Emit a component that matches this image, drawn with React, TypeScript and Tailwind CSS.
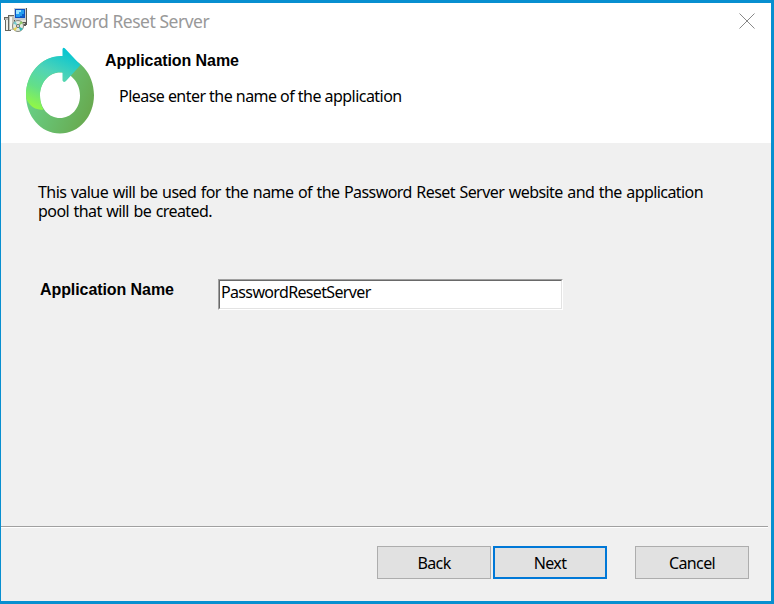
import React from "react";

function InstallerIcon() {
  return (
    <svg width="24" height="25" viewBox="0 0 24 25" shapeRendering="crispEdges">
      <path d="M0 9h4V7h6v14H7v2H1V12H0z" fill="#66665f" />
      <path d="M1 10h3v2H1z" fill="#bdbdb5" />
      <path d="M2 12h2v10H2z" fill="#f0f0e9" />
      <path d="M5 8h5v14H5z" fill="#c4c4ba" />
      <path d="M6 9h2v12H6z" fill="#f7f7f2" />
      <path d="M10 0h13v12H10z" fill="#c3cbd2" />
      <path d="M22 0h1v12h-1z" fill="#5a5a55" />
      <path d="M11 1h10v9H11z" fill="#0b4fc0" />
      <path d="M12 2h8v7h-8z" fill="#239cf0" />
      <path d="M12 2h5v2h-2v2h-3z" fill="#9be4ff" />
      <path d="M18 6h2v3h-4V8h2z" fill="#0b5fcb" />
      <path d="M10 12h13v4l-2 2H10z" fill="#5a5a55" />
      <path d="M11 12h11v2H11z" fill="#e3e3da" />
      <path d="M18 15h3v1h-3z" fill="#c9c9be" />
      <g shapeRendering="auto">
        <circle cx="14" cy="18" r="5.500" fill="#e3eadf" stroke="#85887e" />
        <path d="M14 18 9 15.200l2.200-2.200z" fill="#75c8cd" />
        <path d="m14 18 5 2.800-2.500 2.200z" fill="#31b9b9" />
        <path d="m14 18-5 3 2.300 2z" fill="#e9d352" />
        <path d="m14 18 5-3-2-2z" fill="#8fca65" />
        <circle cx="14" cy="18" r="1.500" fill="#fff" stroke="#666" />
      </g>
    </svg>
  );
}

function ResetLogo() {
  return (
    <svg width="70" height="88" viewBox="0 0 70 88">
      <defs>
        <linearGradient id="ring" x1="0" y1="0.4" x2="0.9" y2="0.8">
          <stop stopColor="#68d48c" />
          <stop offset="1" stopColor="#68aa50" />
        </linearGradient>
        <linearGradient id="arrow" x1="0.65" y1="0" x2="0.25" y2="1">
          <stop stopColor="#06c5d2" />
          <stop offset="0.4" stopColor="#50d4b6" />
          <stop offset="0.7" stopColor="#63df89" />
          <stop offset="1" stopColor="#91f747" />
        </linearGradient>
      </defs>
      <path
        fill="url(#ring)"
        fillRule="evenodd"
        d="M35 9.500C54 9.500 69 26.500 69 48S54 86.500 35 86.500 1 69.500 1 48 16 9.500 35 9.500ZM35 25.500C24 25.500 15 35.500 15 48.500S24 71 35 71 55 61.500 55 48.500 46 25.500 35 25.500Z"
      />
      <path
        fill="url(#arrow)"
        d="M37.500 9V2Q38.500 0 40 1.500L55.500 18 41 34Q38.500 36 37.500 33.500V25.500C25 24 15 35 15 48.500Q15 57 18.500 62.500C9 64 1 56 1 48 1 26 18 8 37.500 9Z"
      />
    </svg>
  );
}

function DialogButton({ label, primary = false, className = "" }: { label: string; primary?: boolean; className?: string }) {
  return (
    <button
      className={`h-[33px] w-[114px] bg-[#e1e1e1] pt-px text-[16px] tracking-[-0.6px] ${primary ? "border-2 border-[#0078d7] leading-[28px]" : "border border-[#adadad] leading-[30px]"} ${className}`}
    >
      {label}
    </button>
  );
}

export default function App() {
  return (
    <div className="h-[604px] w-[774px] overflow-hidden bg-[#078fd0] pt-[3px] pl-px font-['Noto_Sans',sans-serif] text-black">
      <div className="flex h-[598px] w-[770px] flex-col bg-[#f0f0f0]">
        <header className="h-[140px] bg-white">
          <div className="flex h-[38px] items-start justify-between pt-[5px] pr-[15px] pl-[3px]">
            <div className="flex">
              <InstallerIcon />
              <h1 className="ml-[5px] text-[17.5px] leading-[27px] tracking-[-0.48px] whitespace-nowrap text-[#999]">Password Reset Server</h1>
            </div>
            <svg className="mt-[5px]" width="17" height="16" viewBox="0 0 17 16" stroke="#888" strokeWidth="1">
              <path d="m.5.5 15 15m0-15-15 15" />
            </svg>
          </div>
          <div className="flex pl-6">
            <div className="mt-[6px]">
              <ResetLogo />
            </div>
            <div className="ml-[10px] pt-[10px]">
              <h2 className="font-['Liberation_Sans',sans-serif] text-[16px] leading-5 font-bold tracking-[-0.08px]">Application Name</h2>
              <p className="mt-[15px] ml-[14px] text-[16px] leading-5 tracking-[-0.54px] whitespace-nowrap">Please enter the name of the application</p>
            </div>
          </div>
        </header>
        <main className="h-[383px] pt-[40px] pl-[37px]">
          <p className="text-[16px] leading-[19px] tracking-[-0.57px] whitespace-nowrap [word-spacing:0.93px]">
            This value will be used for the name of the Password Reset Server website and the application
            <br />
            pool that will be created.
          </p>
          <div className="mt-[58px] flex pl-[2px]">
            <label htmlFor="application-name" className="w-[178px] pt-px font-['Liberation_Sans',sans-serif] text-[16px] leading-5 font-bold tracking-[-0.08px]">
              Application Name
            </label>
            <div className="h-[31px] w-[345px] border border-t-[#a0a0a0] border-r-white border-b-white border-l-[#a0a0a0]">
              <input
                id="application-name"
                defaultValue="PasswordResetServer"
                className="block h-[29px] w-[343px] border border-t-[#696969] border-r-[#e3e3e3] border-b-[#e3e3e3] border-l-[#696969] bg-white pb-[5px] pl-px text-[16px] leading-[22px] tracking-[-0.65px] outline-none"
              />
            </div>
          </div>
        </main>
        <div className="mr-[3px] h-[2px] border-t border-b border-t-[#a0a0a0] border-b-white" />
        <footer className="flex pt-[18px] pl-[376px]">
          <DialogButton label="Back" />
          <DialogButton label="Next" primary className="ml-[2px]" />
          <DialogButton label="Cancel" className="ml-7" />
        </footer>
      </div>
    </div>
  );
}
